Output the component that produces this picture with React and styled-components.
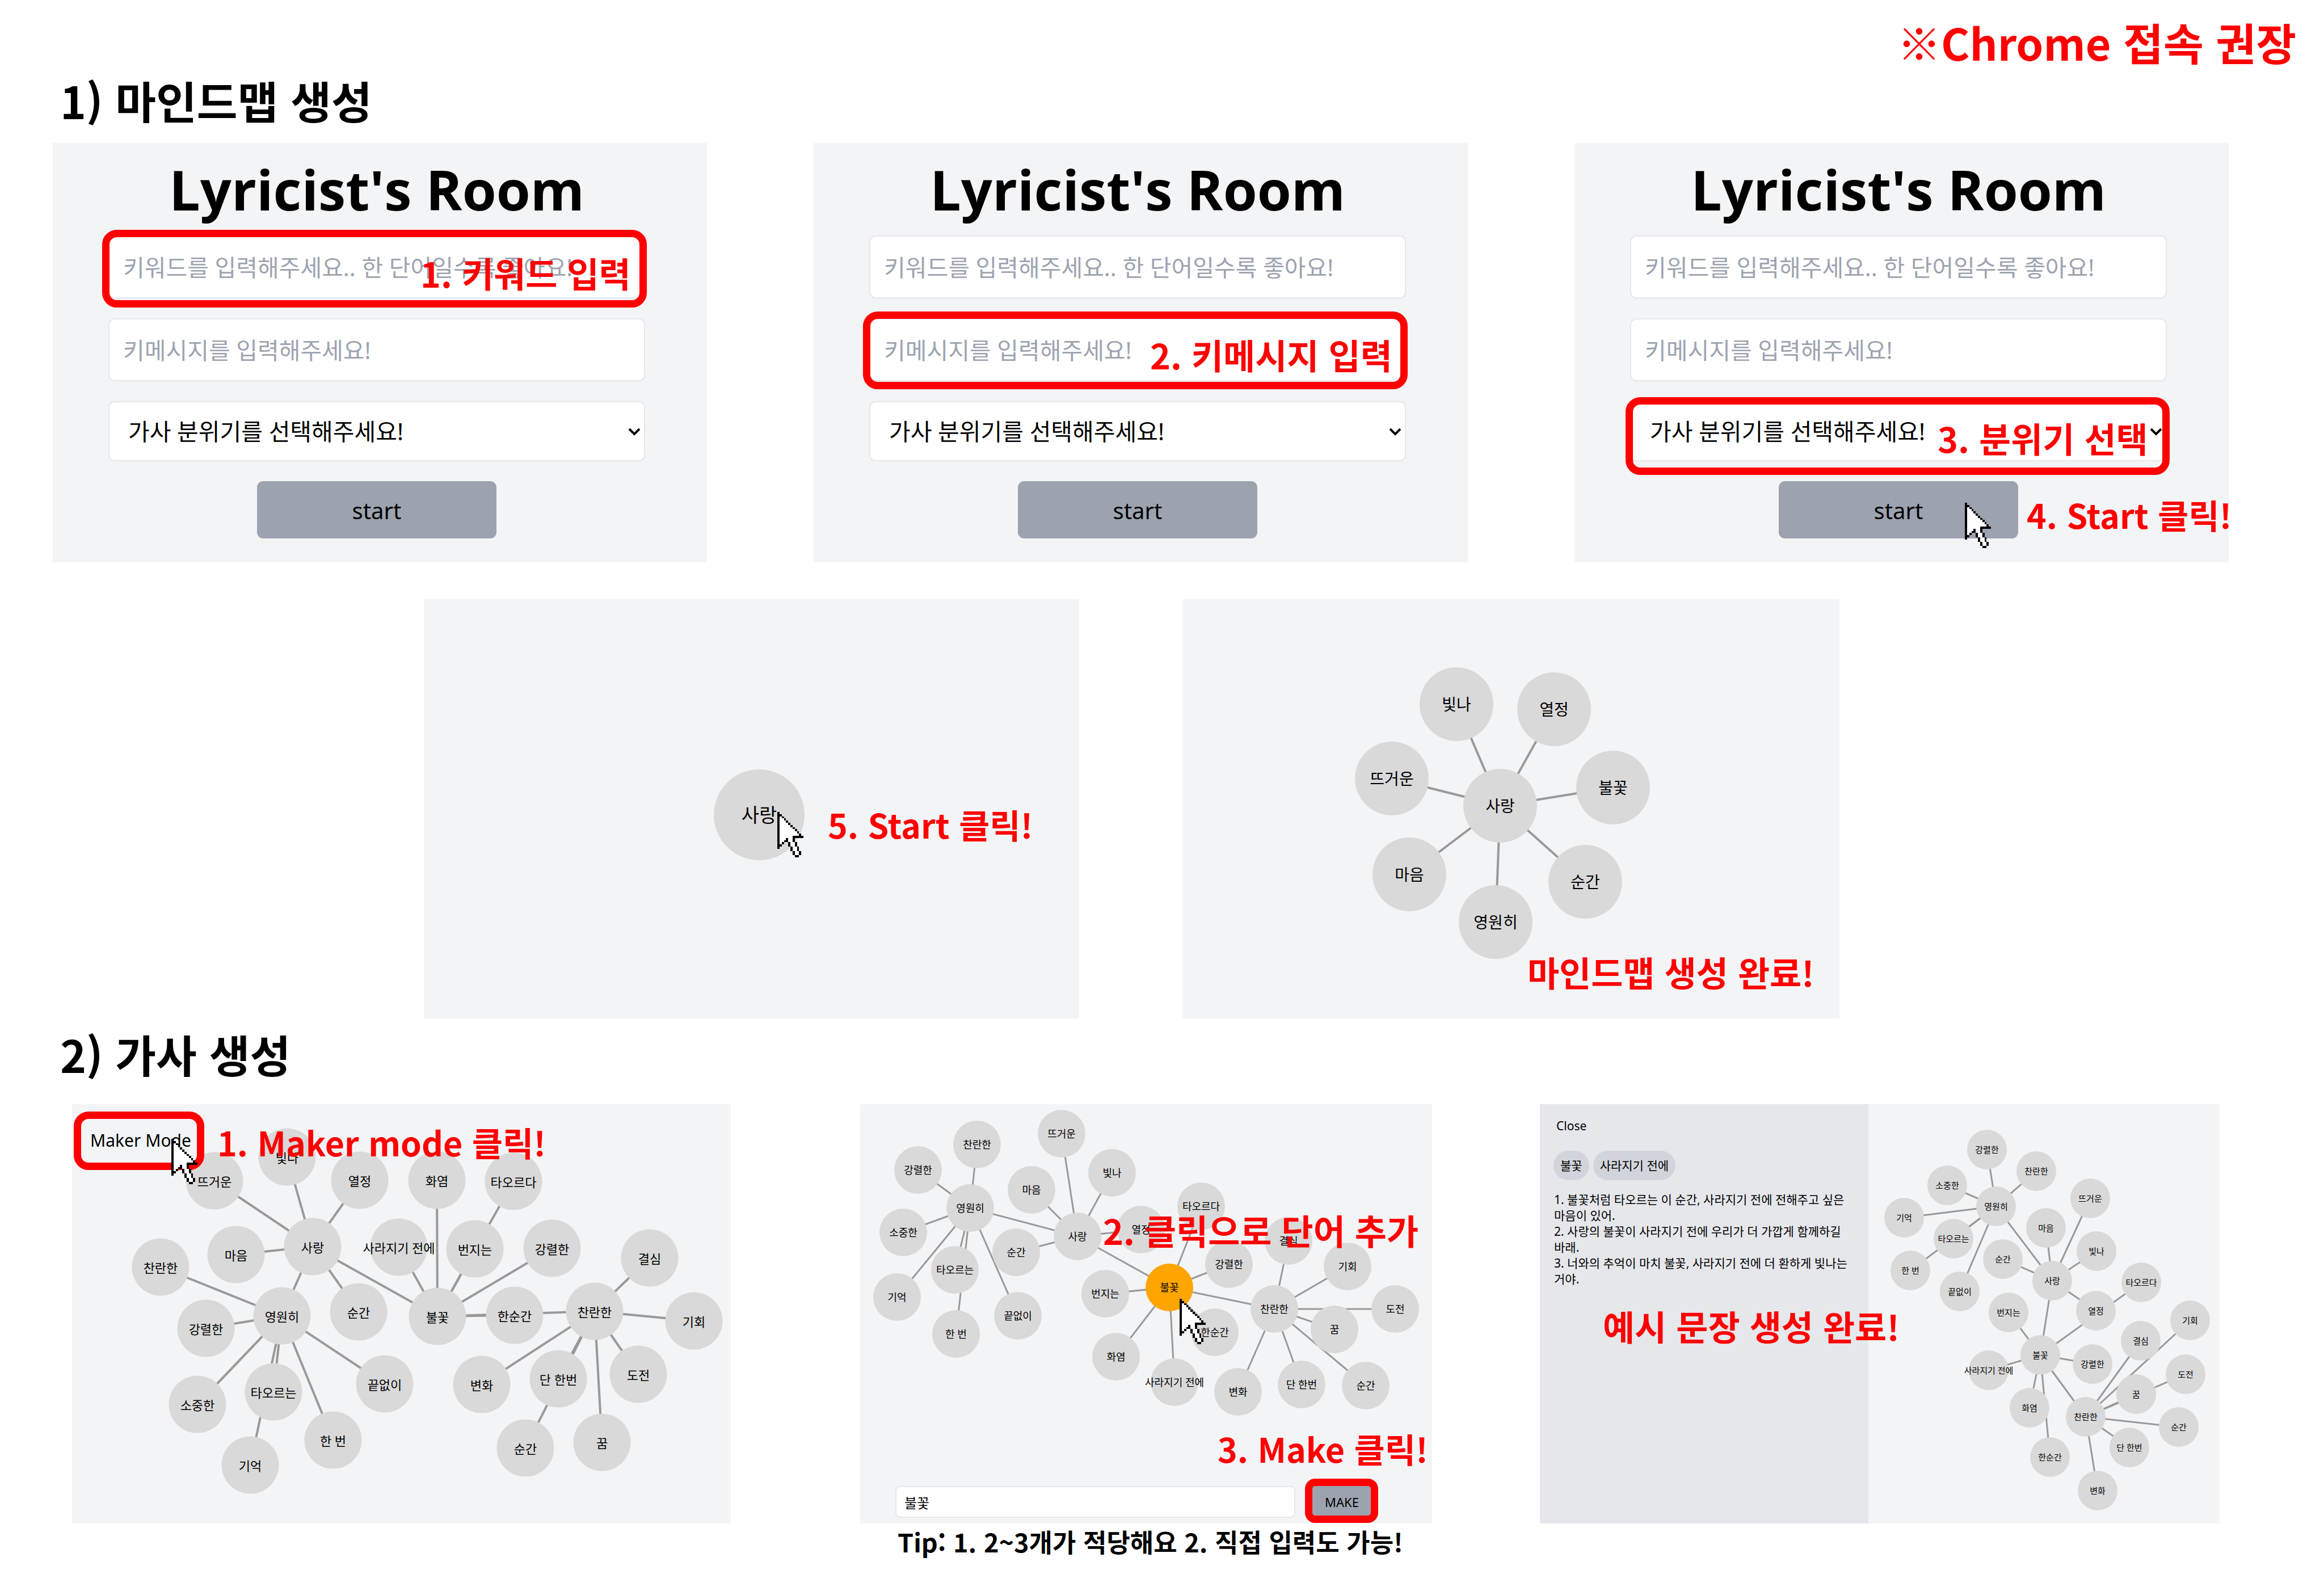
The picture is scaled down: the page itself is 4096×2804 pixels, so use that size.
import React from "react";
import styled, { createGlobalStyle } from "styled-components";

const GlobalStyle = createGlobalStyle`
  *, *::before, *::after { box-sizing: border-box; }
  html, body { margin: 0; background: #ffffff; }
  body {
    color: #000000;
    font-family: "Noto Sans", "Noto Sans CJK KR", sans-serif;
  }
  h1, h2, p { margin: 0; }
  button, input, select { font: inherit; color: inherit; margin: 0; }
`;

/* ---------- page ---------- */

const Page = styled.main`
  display: flex;
  flex-direction: column;
`;

const Notice = styled.p`
  padding: 18px 49px 0 0;
  text-align: right;
  font: 700 77px/112px "Noto Sans CJK KR", sans-serif;
  color: #ff0000;
`;

const SectionTitle = styled.h1`
  padding: ${(p) => (p.$spaced ? "16px 0 43px 106px" : "0 0 30px 106px")};
  font: 700 78px/92px "Noto Sans CJK KR", sans-serif;
`;

const Row = styled.div`
  display: flex;
  gap: ${(p) => p.$gap}px;
  padding: ${(p) => p.$padding};
`;

const Panel = styled.section`
  position: relative;
  display: flex;
  flex-direction: ${(p) => (p.$split ? "row" : "column")};
  flex: ${(p) => p.$grow || 1} 1 0;
  min-width: 0;
  min-height: 739px;
  margin-left: ${(p) => p.$shift || 0}px;
  background: #f3f4f6;
`;

/* ---------- red pen marks over the panels ---------- */

const Highlight = styled.div`
  position: absolute;
  z-index: 2;
  top: ${(p) => p.$top}px;
  left: ${(p) => p.$left};
  right: ${(p) => p.$right};
  width: ${(p) => p.$width};
  height: ${(p) => p.$height}px;
  border: 13px solid #ff0000;
  border-radius: ${(p) => p.$radius || 26}px;
  pointer-events: none;
`;

const Callout = styled.p`
  position: absolute;
  z-index: 3;
  top: ${(p) => p.$top}px;
  left: ${(p) => p.$left}px;
  white-space: nowrap;
  font: 700 ${(p) => (p.$latin ? 59 : 61)}px/80px "Noto Sans CJK KR", sans-serif;
  color: #ff0000;
`;

const Tip = styled.p`
  position: absolute;
  top: 100%;
  left: 66px;
  white-space: nowrap;
  font: 700 45px/64px "Noto Sans CJK KR", sans-serif;
`;

const CursorIcon = styled.svg`
  position: absolute;
  z-index: 4;
  top: ${(p) => p.$top}px;
  left: ${(p) => p.$left}px;
  width: 46px;
  height: 80px;
  pointer-events: none;
`;

const CURSOR = [
  "X",
  "XX",
  "XoX",
  "XooX",
  "XoooX",
  "XooooX",
  "XoooooX",
  "XooooooX",
  "XoooooooX",
  "XooooooooX",
  "XoooooooooX",
  "XooooooXXXXX",
  "XoooXooX",
  "XooXXooX",
  "XoX  XooX",
  "XX   XooX",
  "X     XooX",
  "      XooX",
  "       XooX",
  "       XooX",
  "        XX",
];

function Cursor({ top, left }) {
  return (
    <CursorIcon $top={top} $left={left} viewBox="0 0 12 21" preserveAspectRatio="none" shapeRendering="crispEdges" aria-hidden="true">
      {CURSOR.flatMap((row, y) =>
        [...row].map((c, x) =>
          c === " " ? null : (
            <rect key={`${x}-${y}`} x={x} y={y} width="1" height="1" fill={c === "X" ? "#000" : "#fff"} />
          )
        )
      )}
    </CursorIcon>
  );
}

/* ---------- start form ---------- */

const Form = styled.form`
  display: flex;
  flex-direction: column;
  align-items: stretch;
  gap: 35px;
  padding: 0 109px 42px 98px;
`;

const FormTitle = styled.h2`
  margin-bottom: -35px;
  text-align: center;
  white-space: nowrap;
  font: 700 97px/163px "Open Sans", "Noto Sans", sans-serif;
`;

const TextField = styled.input`
  width: 100%;
  height: 111px;
  padding: 0 24px;
  border: 2px solid #e5e7eb;
  border-radius: 11px;
  background: #ffffff;
  font-size: 41px;
  &::placeholder { color: #9ca3af; opacity: 1; }
`;

const SelectWrap = styled.div`
  position: relative;
  display: flex;
`;

const SelectField = styled.select`
  appearance: none;
  width: 100%;
  height: 106px;
  padding: 0 60px 0 33px;
  border: 2px solid #e5e7eb;
  border-radius: 11px;
  background: #ffffff;
  font-size: 41px;
`;

const Chevron = styled.svg`
  position: absolute;
  right: 8px;
  top: 46px;
  width: 22px;
  height: 16px;
  pointer-events: none;
`;

const StartButton = styled.button`
  align-self: center;
  width: 422px;
  height: 101px;
  padding: 2px 0 0;
  border: 0;
  border-radius: 11px;
  background: #9ca3af;
  font-size: 40px;
`;

function StartForm() {
  return (
    <Form onSubmit={(e) => e.preventDefault()}>
      <FormTitle>Lyricist's Room</FormTitle>
      <TextField type="text" aria-label="키워드" placeholder="키워드를 입력해주세요.. 한 단어일수록 좋아요!" />
      <TextField type="text" aria-label="키메시지" placeholder="키메시지를 입력해주세요!" />
      <SelectWrap>
        <SelectField aria-label="가사 분위기" defaultValue="">
          <option value="">가사 분위기를 선택해주세요!</option>
        </SelectField>
        <Chevron viewBox="0 0 22 16" aria-hidden="true">
          <path d="M2 3l9 9 9-9" fill="none" stroke="#000" strokeWidth="4" />
        </Chevron>
      </SelectWrap>
      <StartButton type="submit">start</StartButton>
    </Form>
  );
}

/* ---------- mind map ---------- */

const WORDS = {
  love: "사랑", shine: "빛나", hot: "뜨거운", passion: "열정", heart: "마음", moment: "순간", forever: "영원히",
  flame: "불꽃", vanish: "사라지기 전에", blaze: "화염", spread: "번지는", burn: "타오르다", intense: "강렬한", instant: "한순간", bright: "찬란한",
  bright2: "찬란한", intense2: "강렬한", precious: "소중한", burning: "타오르는", memory: "기억", once: "한 번", endless: "끝없이",
  resolve: "결심", chance: "기회", change: "변화", single: "단 한번", moment2: "순간", challenge: "도전", dream: "꿈",
};

const LINKS = {
  love: ["shine", "hot", "passion", "heart", "moment", "flame", "forever"],
  forever: ["bright2", "intense2", "precious", "burning", "memory", "once", "endless"],
  flame: ["vanish", "blaze", "spread", "burn", "intense", "instant", "bright"],
  bright: ["resolve", "chance", "change", "single", "moment2", "challenge", "dream"],
};

const Canvas = styled.div`
  position: relative;
  flex: 1;
  min-width: 0;
`;

const Lines = styled.svg`
  position: absolute;
  inset: 0;
  width: 100%;
  height: ${(p) => p.$height}px;
`;

const Node = styled.div`
  position: absolute;
  display: flex;
  align-items: center;
  justify-content: center;
  width: ${(p) => p.$size}px;
  height: ${(p) => p.$size}px;
  transform: translate(-50%, -50%);
  border-radius: 50%;
  background: ${(p) => (p.$active ? "#ffa500" : "#d9d9d9")};
  font-size: ${(p) => p.$font}px;
  line-height: 1;
  white-space: nowrap;
`;

function MindMap({ width, height, size, font, stroke, nodes, active }) {
  const edges = Object.entries(LINKS).flatMap(([from, list]) =>
    list.filter((to) => nodes[from] && nodes[to]).map((to) => [from, to])
  );
  return (
    <Canvas>
      <Lines $height={height} viewBox={`0 0 ${width} ${height}`} preserveAspectRatio="none" aria-hidden="true">
        {edges.map(([a, b]) => (
          <line key={a + b} x1={nodes[a][0]} y1={nodes[a][1]} x2={nodes[b][0]} y2={nodes[b][1]} stroke="#999999" strokeWidth={stroke} />
        ))}
      </Lines>
      {Object.entries(nodes).map(([key, [x, y]]) => (
        <Node key={key} $size={size} $font={font} $active={active === key} style={{ left: `${(x / width) * 100}%`, top: y }}>
          {WORDS[key]}
        </Node>
      ))}
    </Canvas>
  );
}

const SINGLE = { love: [591, 380] };

const FIRST = {
  shine: [483, 185], passion: [655, 194], flame: [759, 332], love: [560, 364],
  hot: [369, 316], heart: [400, 485], moment: [710, 498], forever: [552, 569],
};

const FULL = {
  shine: [379, 93], hot: [251, 135], passion: [507, 134], blaze: [643, 134], burn: [778, 136],
  love: [424, 251], heart: [289, 265], vanish: [576, 252], spread: [710, 255], intense: [846, 254],
  resolve: [1018, 271], bright2: [156, 287], forever: [370, 373], moment: [505, 366], flame: [644, 374],
  instant: [780, 372], bright: [921, 365], chance: [1096, 382], intense2: [236, 395], precious: [221, 529],
  burning: [355, 507], endless: [551, 493], change: [722, 494], single: [857, 484], challenge: [998, 476],
  memory: [314, 636], once: [460, 592], moment2: [799, 606], dream: [934, 596],
};

const PICK = {
  hot: [355, 52], bright2: [206, 71], intense2: [102, 116], shine: [444, 121], heart: [302, 151],
  forever: [194, 183], burn: [601, 180], passion: [495, 221], love: [383, 233], precious: [76, 226],
  moment: [275, 261], resolve: [755, 241], intense: [650, 282], chance: [859, 286], burning: [167, 292],
  flame: [545, 323], spread: [432, 334], bright: [730, 361], challenge: [943, 361], memory: [65, 340],
  endless: [278, 373], once: [169, 405], instant: [625, 402], dream: [836, 397], blaze: [451, 445],
  vanish: [554, 490], change: [666, 507], single: [778, 494], moment2: [891, 496],
};

const RESULT = {
  intense2: [209, 80], bright2: [296, 118], precious: [139, 143], hot: [391, 166], forever: [225, 180],
  memory: [63, 200], heart: [313, 218], burning: [150, 237], shine: [402, 259], moment: [237, 273],
  once: [74, 293], love: [324, 311], burn: [481, 314], endless: [161, 330], passion: [401, 364],
  spread: [247, 367], chance: [567, 381], resolve: [480, 417], flame: [303, 442], intense: [395, 458],
  vanish: [212, 469], challenge: [559, 476], dream: [472, 511], blaze: [284, 535], bright: [383, 551],
  moment2: [547, 569], single: [460, 605], instant: [320, 622], change: [404, 681],
};

/* ---------- maker mode ---------- */

const ModeButton = styled.button`
  position: absolute;
  z-index: 1;
  top: 44px;
  left: 32px;
  padding: 0;
  border: 0;
  background: none;
  font-size: 30px;
  line-height: 40px;
`;

const MakeBar = styled.form`
  display: flex;
  gap: 25px;
  padding: 0 102px 10px 62px;
`;

const MakeInput = styled.input`
  flex: 1;
  min-width: 0;
  height: 56px;
  padding: 0 14px;
  border: 2px solid #e5e7eb;
  border-radius: 8px;
  background: #ffffff;
  font-size: 24px;
`;

const MakeButton = styled.button`
  width: 114px;
  height: 56px;
  padding: 0;
  border: 0;
  border-radius: 8px;
  background: #9ca3af;
  font-size: 22px;
`;

const Sidebar = styled.aside`
  display: flex;
  flex-direction: column;
  align-items: flex-start;
  flex: 0 0 579px;
  padding: 24px 24px 0 25px;
  background: #e5e7eb;
  font-size: 21px;
  line-height: 28px;
`;

const CloseButton = styled.button`
  padding: 0 4px;
  border: 0;
  background: none;
  font-size: 21px;
  line-height: 28px;
`;

const Chips = styled.div`
  display: flex;
  gap: 7px;
  margin: 30px 0 20px -1px;
`;

const Chip = styled.span`
  padding: 0 12px;
  border-radius: 26px;
  background: #d1d5db;
  line-height: 52px;
`;

const Lyric = styled.p`
  word-break: keep-all;
`;

export default function App() {
  return (
    <>
      <GlobalStyle />
      <Page lang="ko">
        <Notice>※Chrome 접속 권장</Notice>

        <SectionTitle>1) 마인드맵 생성</SectionTitle>
        <Row $gap={188} $padding="0 168px 65px 93px">
          <Panel>
            <StartForm />
            <Highlight $top={153} $left="87px" $right="106px" $height={137} />
            <Callout $top={189} $left={648}>1. 키워드 입력</Callout>
          </Panel>
          <Panel>
            <StartForm />
            <Highlight $top={297} $left="87px" $right="106px" $height={137} />
            <Callout $top={333} $left={593}>2. 키메시지 입력</Callout>
          </Panel>
          <Panel>
            <StartForm />
            <Highlight $top={448} $left="90px" $right="104px" $height={137} />
            <Callout $top={480} $left={640}>3. 분위기 선택</Callout>
            <Callout $latin $top={615} $left={797}>4. Start 클릭!</Callout>
            <Cursor top={634} left={688} />
          </Panel>
        </Row>

        <Row $gap={182} $padding="0 854px 0 747px">
          <Panel $grow={1155}>
            <MindMap width={1155} height={739} size={160} font={34} stroke={4} nodes={SINGLE} />
            <Callout $latin $top={357} $left={712}>5. Start 클릭!</Callout>
            <Cursor top={375} left={623} />
          </Panel>
          <Panel $grow={1158}>
            <MindMap width={1158} height={739} size={130} font={28} stroke={4} nodes={FIRST} />
            <Callout $top={617} $left={608}>마인드맵 생성 완료!</Callout>
          </Panel>
        </Row>

        <SectionTitle $spaced>2) 가사 생성</SectionTitle>
        <Row $gap={190} $padding="0 184px 120px 127px">
          <Panel $grow={1161}>
            <MindMap width={1161} height={739} size={101} font={22} stroke={4} nodes={FULL} />
            <ModeButton type="button">Maker Mode</ModeButton>
            <Highlight $top={13} $left="3px" $width="230px" $height={103} />
            <Callout $latin $top={27} $left={256}>1. Maker mode 클릭!</Callout>
            <Cursor top={61} left={175} />
          </Panel>
          <Panel $grow={1008} $shift={38}>
            <MindMap width={1008} height={673} size={84} font={18} stroke={3} nodes={PICK} active="flame" />
            <MakeBar onSubmit={(e) => e.preventDefault()}>
              <MakeInput type="text" aria-label="단어" defaultValue="불꽃" />
              <MakeButton type="submit">MAKE</MakeButton>
            </MakeBar>
            <Highlight $top={660} $right="95px" $width="129px" $height={78} $radius={18} />
            <Callout $top={182} $left={428}>2. 클릭으로 단어 추가</Callout>
            <Callout $latin $top={567} $left={630}>3. Make 클릭!</Callout>
            <Cursor top={343} left={563} />
            <Tip>Tip: 1. 2~3개가 적당해요 2. 직접 입력도 가능!</Tip>
          </Panel>
          <Panel $grow={1198} $split>
            <Sidebar>
              <CloseButton type="button">Close</CloseButton>
              <Chips>
                <Chip>불꽃</Chip>
                <Chip>사라지기 전에</Chip>
              </Chips>
              <Lyric>1. 불꽃처럼 타오르는 이 순간, 사라지기 전에 전해주고 싶은 마음이 있어.</Lyric>
              <Lyric>2. 사랑의 불꽃이 사라지기 전에 우리가 더 가깝게 함께하길 바래.</Lyric>
              <Lyric>3. 너와의 추억이 마치 불꽃, 사라지기 전에 더 환하게 빛나는 거야.</Lyric>
            </Sidebar>
            <MindMap width={619} height={739} size={70} font={15} stroke={3} nodes={RESULT} />
            <Callout $top={351} $left={111}>예시 문장 생성 완료!</Callout>
          </Panel>
        </Row>
      </Page>
    </>
  );
}
